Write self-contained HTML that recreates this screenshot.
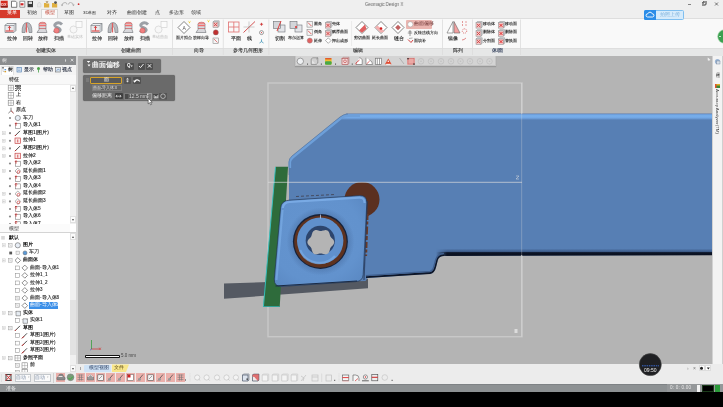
<!DOCTYPE html>
<html><head><meta charset="utf-8">
<style>
*{margin:0;padding:0;box-sizing:border-box}
html,body{width:723px;height:407px;overflow:hidden;background:#000;font-family:"Liberation Sans",sans-serif}
.a{position:absolute}
.t{white-space:nowrap;line-height:1;font-weight:400;will-change:transform}
svg{position:absolute;left:0;top:0;overflow:visible}
</style></head><body><div id="root" style="position:absolute;left:0;top:0;width:723px;height:407px;overflow:hidden;filter:blur(0.3px)">
<div class="a" style="left:0px;top:0px;width:723px;height:18px;background:#efefef"></div>
<div class="a" style="left:0px;top:18px;width:723px;height:30px;background:#f9f9f9;border-top:1px solid #dedede"></div>
<div class="a" style="left:0px;top:48px;width:723px;height:7.5px;background:#e6e7e7;border-top:1px solid #dedede"></div>
<div class="a" style="left:0px;top:55.5px;width:723px;height:0.5px;background:#b0b0b0"></div>
<div class="a" style="left:0px;top:56px;width:76px;height:316px;background:#fff"></div>
<div class="a" style="left:0px;top:56px;width:76px;height:8px;background:#8e8e8e"></div>
<div class="a" style="left:76px;top:56px;width:2px;height:308px;background:#d8d8d8"></div>
<div class="a" style="left:78px;top:56px;width:634px;height:308px;background:#b4b4b4"></div>
<div class="a" style="left:712px;top:56px;width:11px;height:308px;background:#f3f3f3;border-left:1px solid #d2d2d2"></div>
<div class="a" style="left:76px;top:364px;width:647px;height:20px;background:#ececec"></div>
<div class="a" style="left:0px;top:372px;width:76px;height:12px;background:#ececec"></div>
<div class="a" style="left:0px;top:383.6px;width:723px;height:8.2px;background:#8d9193;border-top:0.5px solid #7e8285"></div>
<svg width="723" height="407" viewBox="0 0 723 407">
<defs>
<clipPath id="vpc"><rect x="78" y="56" width="634" height="308"/></clipPath>
<linearGradient id="topg" x1="0" y1="113.5" x2="0" y2="120" gradientUnits="userSpaceOnUse">
 <stop offset="0" stop-color="#5d7db0"/>
 <stop offset="0.12" stop-color="#6a9ad8"/>
 <stop offset="0.35" stop-color="#78b0ec"/>
 <stop offset="0.68" stop-color="#72a6e4"/>
 <stop offset="1" stop-color="#577fb4"/>
</linearGradient>
<linearGradient id="botg" x1="0" y1="248.5" x2="0" y2="255.2" gradientUnits="userSpaceOnUse">
 <stop offset="0" stop-color="#577fb4"/>
 <stop offset="0.45" stop-color="#3d5c8a"/>
 <stop offset="0.62" stop-color="#0c1426"/>
 <stop offset="1" stop-color="#0a1020"/>
</linearGradient>
<radialGradient id="insg" cx="0.45" cy="0.45" r="0.7">
 <stop offset="0" stop-color="#6494cf"/>
 <stop offset="0.7" stop-color="#6292cd"/>
 <stop offset="1" stop-color="#5a88c2"/>
</radialGradient>
<linearGradient id="fadeLg" x1="436" y1="0" x2="447" y2="0" gradientUnits="userSpaceOnUse"><stop offset="0" stop-color="#000"/><stop offset="1" stop-color="#fff"/></linearGradient>
<mask id="fadeL" maskUnits="userSpaceOnUse" x="400" y="240" width="330" height="30"><rect x="400" y="240" width="330" height="30" fill="url(#fadeLg)"/></mask>
<radialGradient id="shad" cx="0.5" cy="0.5" r="0.5">
 <stop offset="0.7" stop-color="#3a5a8a" stop-opacity="0.5"/>
 <stop offset="1" stop-color="#3a5a8a" stop-opacity="0"/>
</radialGradient>
</defs>
<g clip-path="url(#vpc)">
  <polygon points="224,283.5 368,278.8 368,288.2 224,298.8" fill="#545962"/>
  <rect x="268" y="83" width="254" height="253.7" fill="none" stroke="#c8c8c8" stroke-width="1.4"/>
  <polygon points="275.5,166.8 288,166.8 279.7,307 263.2,307" fill="#2e6b3b"/>
  <line x1="275.5" y1="167" x2="263.4" y2="307" stroke="#35c4c4" stroke-width="0.9"/>
  <line x1="279.7" y1="306.5" x2="263.2" y2="306.5" stroke="#35b0b0" stroke-width="0.8"/>
  <!-- body -->
  <path d="M289,290 L289,162 Q289,158.5 292,156 L340,117 Q343.5,114 348,114 L712,114 L712,255 L444,255.8 Q439,256.2 437.8,260 L436,267 Q434.5,273.2 430,273.8 L367.5,278 L365.5,281 L289,283 Z" fill="#577fb4"/>
  <path d="M346,113.5 L712,113.5 L712,120 L341.5,120z" fill="url(#topg)"/>
  <path d="M436,248.5 L712,248.5 L712,255.2 L436,256z" fill="url(#botg)" mask="url(#fadeL)"/>
  <!-- left part bottom dark edge -->
  <path d="M366,277.2 L430,273 Q434,272.3 435.3,266.5 L437,259.8 Q438.6,255.2 444,255.2" stroke="#0e1628" stroke-width="1.8" fill="none"/>
  <path d="M366,275.6 L430,271.4 Q433,270.8 434,266 L435.8,259.5 Q437.3,253.8 444,253.5" stroke="#3f5f8e" stroke-width="1.4" fill="none"/>
  <!-- diagonal highlight -->
  <path d="M289.8,168 L289.8,162 Q290,159.5 292.8,157.2 L340.8,118.2 Q343.8,115.6 348,115.6 L360,115.6" stroke="#6d9fd9" stroke-width="2.6" fill="none"/>
  <path d="M289,175 L289,162 Q289,158.5 292,156 L340,117 Q343.5,114 348,114" stroke="#54749e" stroke-width="0.6" fill="none"/>
  <!-- brown hole -->
  <circle cx="362" cy="199.5" r="17.5" fill="#5b3020"/>
  <path d="M367.5,214 L366,256" stroke="#6a3a26" stroke-width="2.2" stroke-dasharray="6,1.5,3,2,8,1.5,4,2"/><path d="M367.2,201 L364,280" stroke="#2a3c5e" stroke-width="1.2" opacity="0.8"/>
  <!-- insert -->
  <path d="M289,200.2 L359.5,195.6 Q367,195.1 366.8,203 L363.2,274.5 Q362.8,281.2 356,281.6 L282,286.4 Q274,287 274.3,279 L280.6,208 Q281.3,200.7 289,200.2 Z" fill="url(#insg)" stroke="#1a2a44" stroke-width="0.6"/>
  <path d="M282.8,208 Q283.3,202.3 289.5,202 L359,197.6 Q364.5,197.3 364.6,203" stroke="#80b0ea" stroke-width="2.2" fill="none" opacity="0.8"/>
  <path d="M282.6,210 L276.5,280" stroke="#7fb0ea" stroke-width="2" fill="none" opacity="0.6"/>
  <path d="M275.5,286 L357,281" stroke="#1a2a44" stroke-width="1" fill="none"/>
  <path d="M296,196.5 L335,194.5" stroke="#3a2a2a" stroke-width="1" stroke-dasharray="3,2" opacity="0.6"/>
  <!-- ring -->
  <circle cx="320.5" cy="241.5" r="34" fill="url(#shad)"/>
  <circle cx="320.4" cy="241.4" r="27.5" fill="#16223a"/>
  <circle cx="320.4" cy="241.6" r="26.2" fill="#5e321f"/>
  <circle cx="320.2" cy="240.8" r="23.2" fill="#6090cc"/>
  <path d="M300,250 A21,21 0 0 0 335,256" stroke="#7db0ea" stroke-width="2.5" fill="none" opacity="0.6"/>
  
  <circle cx="320.3" cy="240.4" r="14.6" fill="#24385c" opacity="0.85"/>
  <polygon points="323.8,230.4 324.7,230.2 325.6,230.1 326.5,230.2 327.4,230.5 328.1,231.0 328.7,231.7 329.1,232.5 329.4,233.3 329.7,234.2 329.9,235.0 330.1,235.8 330.4,236.5 330.8,237.1 331.3,237.7 331.9,238.3 332.6,238.9 333.2,239.6 333.7,240.3 334.0,241.2 334.2,242.0 334.1,242.9 333.8,243.8 333.4,244.5 332.8,245.3 332.2,245.9 331.5,246.5 331.0,247.1 330.6,247.7 330.2,248.3 330.0,249.1 329.8,249.9 329.5,250.7 329.3,251.6 328.8,252.4 328.3,253.2 327.6,253.7 326.8,254.1 326.0,254.3 325.1,254.3 324.1,254.1 323.3,253.9 322.4,253.7 321.7,253.5 320.9,253.4 320.2,253.4 319.4,253.6 318.6,253.8 317.8,254.0 316.9,254.2 316.0,254.3 315.1,254.2 314.2,253.9 313.5,253.4 312.9,252.7 312.5,251.9 312.2,251.1 311.9,250.2 311.7,249.4 311.5,248.6 311.2,247.9 310.8,247.3 310.3,246.7 309.7,246.1 309.0,245.5 308.4,244.8 307.9,244.1 307.6,243.2 307.4,242.4 307.5,241.5 307.8,240.6 308.2,239.9 308.8,239.1 309.4,238.5 310.1,237.9 310.6,237.3 311.0,236.7 311.4,236.1 311.6,235.3 311.8,234.5 312.1,233.7 312.3,232.8 312.8,232.0 313.3,231.2 314.0,230.7 314.8,230.3 315.6,230.1 316.5,230.1 317.5,230.3 318.3,230.5 319.2,230.7 319.9,230.9 320.7,231.0 321.4,231.0 322.2,230.8 323.0,230.6" fill="#b4b4b4"/>
  <path d="M320.5,214.5 v4" stroke="#b4c8e8" stroke-width="0.8"/>
  <line x1="268" y1="182.4" x2="522" y2="182.4" stroke="#dcdcdc" stroke-opacity="0.55" stroke-width="1.2"/>
  <line x1="521.6" y1="83" x2="521.6" y2="114" stroke="#dcdcdc" stroke-opacity="0.5" stroke-width="1.2"/><line x1="521.6" y1="114" x2="521.6" y2="255" stroke="#dcdcdc" stroke-opacity="0.25" stroke-width="1.2"/><line x1="521.6" y1="255" x2="521.6" y2="337" stroke="#d0d0d0" stroke-opacity="0.8" stroke-width="1.3"/>
</g>
</svg>
<svg width="723" height="20">
<rect x="0.7" y="0.7" width="7" height="6.8" fill="#d42a1e"/>
<rect x="0.7" y="5.5" width="7" height="2" fill="#8a1a14"/>
<text x="1.3" y="5.6" font-size="3.8" fill="#ffe0e0" font-family="Liberation Sans" font-weight="bold">DX</text>
<path d="M11.5,1.2 h4 l1.3,1.3 v4.8 h-5.3z" fill="#fff" stroke="#444" stroke-width="0.7"/>
<path d="M19.8,1.2 h5 v6 h-5z" fill="#fff" stroke="#555" stroke-width="0.6"/>
<path d="M20.5,3.2 h3 v2.2 h-3z" fill="#d02828"/>
<rect x="27.6" y="1" width="5.4" height="6.2" fill="#3a3a3a"/>
<rect x="28.6" y="1.6" width="3.4" height="2.4" fill="#ddd"/>
<path d="M37.5,7 h3.5 v-3 l-1.7,-2 l-1.8,2z" fill="#e8e8e8" stroke="#ccc" stroke-width="0.5"/>
<path d="M44,3 h2 l0.6,0.6 h2.6 v3.8 h-5.2z" fill="#e0b040"/>
<path d="M45.5,1.5 l1.5,1.6 l1.5,-1.6z" fill="#8a6a30"/>
<path d="M52,3 h2 l0.6,0.6 h2.6 v3.8 h-5.2z" fill="#e0b040"/>
<circle cx="55.5" cy="2.6" r="1.4" fill="#555"/>
<path d="M62,6 q0,-3.5 3,-3.5 q2,0 2,2" fill="none" stroke="#b0b0b0" stroke-width="0.9"/><path d="M60.8,4.5 l1.2,1.8 l1.3,-1.8z" fill="#b0b0b0"/>
<path d="M73.5,6 q0,-3.5 -3,-3.5 q-2,0 -2,2" fill="none" stroke="#b0b0b0" stroke-width="0.9"/><path d="M72.2,4.5 l1.3,1.8 l1.2,-1.8z" fill="#b0b0b0"/>
<circle cx="78.6" cy="4.2" r="0.9" fill="#d03030"/>
<path d="M688,4.5 h3" stroke="#555" stroke-width="0.7"/>
<rect x="702.5" y="2.5" width="3" height="3" fill="none" stroke="#555" stroke-width="0.6"/>
<rect x="703.5" y="1.5" width="3" height="3" fill="none" stroke="#555" stroke-width="0.6"/>
<path d="M715,2.5 l3,3 m0,-3 l-3,3" stroke="#444" stroke-width="0.7"/>
</svg>
<div class="a t" style="left:365px;top:1.6px;font-size:5.2px;color:#666;font-weight:normal;transform:scaleX(0.83);transform-origin:0 0">Geomagic Design X</div>
<div class="a" style="left:644px;top:10px;width:40px;height:9.5px;background:#d6ebfb;border:1px solid #7fbff0;border-radius:1.5px"></div>
<div class="a" style="left:644px;top:10px;width:12px;height:9.5px;background:#2b8de8;border-radius:1.5px 0 0 1.5px"></div>
<svg width="723" height="20"><path d="M647.5,17 a1.6,1.6 0 0 1 0.3,-3.2 a2.3,2.3 0 0 1 4.4,0 a1.6,1.6 0 0 1 0.3,3.2z" fill="none" stroke="#fff" stroke-width="0.9"/></svg>
<div class="a t" style="left:660px;top:12.3px;font-size:5px;color:#7ab0dc;">拍照上传</div>
<div class="a" style="left:0px;top:9.5px;width:20px;height:8.5px;background:#d63a2c"></div>
<div class="a t" style="left:6.8px;top:11px;font-size:4.5px;color:#fff;">菜单</div>
<div class="a t" style="left:26.5px;top:11px;font-size:4.5px;color:#2e2e2e;">初始</div>
<div class="a" style="left:40.5px;top:9.3px;width:17.5px;height:9.2px;background:#f9f9f9;border:1px solid #d8d8d8;border-bottom:none"></div>
<div class="a t" style="left:44.8px;top:11px;font-size:4.5px;color:#c04030;">模型</div>
<div class="a t" style="left:64px;top:11px;font-size:4.5px;color:#2e2e2e;">草图</div>
<div class="a t" style="left:83px;top:11px;font-size:4.3px;color:#2e2e2e;">3D草图</div>
<div class="a t" style="left:107px;top:11px;font-size:4.5px;color:#2e2e2e;">对齐</div>
<div class="a t" style="left:127px;top:11px;font-size:4.5px;color:#2e2e2e;">曲面创建</div>
<div class="a t" style="left:154.5px;top:11px;font-size:4.5px;color:#2e2e2e;">点</div>
<div class="a t" style="left:169px;top:11px;font-size:4.5px;color:#2e2e2e;">多边形</div>
<div class="a t" style="left:191px;top:11px;font-size:4.5px;color:#2e2e2e;">领域</div>
<div class="a t" style="left:6.5px;top:35.9px;font-size:5px;color:#3a3a3a;font-weight:bold">拉伸</div>
<div class="a t" style="left:22.5px;top:35.9px;font-size:5px;color:#3a3a3a;font-weight:bold">回转</div>
<div class="a t" style="left:38px;top:35.9px;font-size:5px;color:#3a3a3a;font-weight:bold">放样</div>
<div class="a t" style="left:54px;top:35.9px;font-size:5px;color:#3a3a3a;font-weight:bold">扫描</div>
<div class="a t" style="left:67px;top:35.2px;font-size:4.2px;color:#c0c0c0;">基础实体</div>
<div class="a t" style="left:35.5px;top:49.4px;font-size:4.5px;color:#444;font-weight:bold">创建实体</div>
<div class="a t" style="left:92px;top:35.9px;font-size:5px;color:#3a3a3a;font-weight:bold">拉伸</div>
<div class="a t" style="left:108px;top:35.9px;font-size:5px;color:#3a3a3a;font-weight:bold">回转</div>
<div class="a t" style="left:124px;top:35.9px;font-size:5px;color:#3a3a3a;font-weight:bold">放样</div>
<div class="a t" style="left:140px;top:35.9px;font-size:5px;color:#3a3a3a;font-weight:bold">扫描</div>
<div class="a t" style="left:152px;top:35.2px;font-size:4.2px;color:#c0c0c0;">基础曲面</div>
<div class="a t" style="left:121px;top:49.4px;font-size:4.5px;color:#444;font-weight:bold">创建曲面</div>
<div class="a t" style="left:176px;top:35.9px;font-size:4.3px;color:#3a3a3a;font-weight:bold">面片拟合</div>
<div class="a t" style="left:193px;top:35.9px;font-size:4.3px;color:#3a3a3a;font-weight:bold">放样向导</div>
<div class="a t" style="left:194px;top:49.4px;font-size:4.5px;color:#444;font-weight:bold">向导</div>
<div class="a t" style="left:231px;top:35.9px;font-size:5px;color:#3a3a3a;font-weight:bold">平面</div>
<div class="a t" style="left:247px;top:35.9px;font-size:5px;color:#3a3a3a;font-weight:bold">线</div>
<div class="a t" style="left:233px;top:49.4px;font-size:4.5px;color:#444;font-weight:bold">参考几何图形</div>
<div class="a t" style="left:275px;top:35.9px;font-size:5px;color:#3a3a3a;font-weight:bold">切割</div>
<div class="a t" style="left:288px;top:35.9px;font-size:4.2px;color:#3a3a3a;font-weight:bold">布尔运算</div>
<div class="a t" style="left:314px;top:22.3px;font-size:4.4px;color:#3a3a3a;font-weight:bold">圆角</div>
<div class="a t" style="left:314px;top:30.4px;font-size:4.4px;color:#3a3a3a;font-weight:bold">倒角</div>
<div class="a t" style="left:314px;top:38.5px;font-size:4.4px;color:#3a3a3a;font-weight:bold">延伸</div>
<div class="a t" style="left:332px;top:22.3px;font-size:4.4px;color:#3a3a3a;font-weight:bold">壳体</div>
<div class="a t" style="left:332px;top:30.4px;font-size:4.4px;color:#3a3a3a;font-weight:bold">赋厚曲面</div>
<div class="a t" style="left:332px;top:38.5px;font-size:4.4px;color:#3a3a3a;font-weight:bold">押出成形</div>
<div class="a t" style="left:354px;top:35.9px;font-size:4.3px;color:#3a3a3a;font-weight:bold">剪切曲面</div>
<div class="a t" style="left:372px;top:35.9px;font-size:4.3px;color:#3a3a3a;font-weight:bold">延长曲面</div>
<div class="a t" style="left:394px;top:35.9px;font-size:5px;color:#3a3a3a;font-weight:bold">缝合</div>
<div class="a" style="left:406px;top:20px;width:26px;height:8.5px;background:#eab5b0;border-radius:1px"></div>
<div class="a t" style="left:413.5px;top:22px;font-size:4.6px;color:#6a3030;">曲面偏移</div>
<div class="a t" style="left:414px;top:31.3px;font-size:4.4px;color:#3a3a3a;font-weight:bold">反转法线方向</div>
<div class="a t" style="left:414px;top:38.9px;font-size:4.4px;color:#3a3a3a;font-weight:bold">面填补</div>
<div class="a t" style="left:353px;top:49.4px;font-size:4.5px;color:#444;font-weight:bold">编辑</div>
<div class="a t" style="left:448px;top:35.9px;font-size:5px;color:#3a3a3a;font-weight:bold">镜像</div>
<div class="a t" style="left:453px;top:49.4px;font-size:4.5px;color:#444;font-weight:bold">阵列</div>
<div class="a t" style="left:482.5px;top:22.3px;font-size:4.4px;color:#3a3a3a;font-weight:bold">移动体</div>
<div class="a t" style="left:482.5px;top:30.4px;font-size:4.4px;color:#3a3a3a;font-weight:bold">删除体</div>
<div class="a t" style="left:482.5px;top:38.5px;font-size:4.4px;color:#3a3a3a;font-weight:bold">分割面</div>
<div class="a t" style="left:505px;top:22.3px;font-size:4.4px;color:#3a3a3a;font-weight:bold">移动面</div>
<div class="a t" style="left:505px;top:30.4px;font-size:4.4px;color:#3a3a3a;font-weight:bold">删除面</div>
<div class="a t" style="left:505px;top:38.5px;font-size:4.4px;color:#3a3a3a;font-weight:bold">替换面</div>
<div class="a t" style="left:491.5px;top:49.4px;font-size:4.6px;color:#3a4660;font-weight:bold">体/面</div>
<svg width="723" height="60"><g opacity="1"><path d="M7,23.5 L16,23.5 L16,30.5 L14,32.5 L5,32.5 L5,25.5z" fill="#c9ccd0" stroke="#6a6e74" stroke-width="0.6"/><path d="M5,25.5 L7,23.5 L16,23.5 L14,25.5z" fill="#eef0f2" stroke="#6a6e74" stroke-width="0.5"/><rect x="5.5" y="26.0" width="8" height="6" fill="#e9eaec"/><path d="M5.5,31.0 h8" stroke="#e05050" stroke-width="1.2"/><path d="M9.5,30.5 v-4 m-1.3,1.3 l1.3,-1.5 l1.3,1.5" stroke="#d02020" stroke-width="0.8" fill="none"/></g><path d="M22,32.5 Q22,22.5 27,22.5 Q32,22.5 32,32.5 L29,32.5 Q29,26.5 27,26.5 Q25,26.5 25,32.5z" fill="#b9bcc1" stroke="#6d7076" stroke-width="0.6"/><path d="M26.5,23.0 L26.5,32.5" stroke="#e06060" stroke-width="1.3"/><ellipse cx="42.5" cy="24.0" rx="3.5" ry="1.8" fill="#f08a8a" stroke="#b04848" stroke-width="0.5"/><path d="M39,24.0 L39,29.5 L37,32.5 L47,32.5 L46,29.5 L46,24.0" fill="#d8d8dc" stroke="#6d7076" stroke-width="0.6"/><path d="M39,25.5 h7" stroke="#f07070" stroke-width="1.5"/><path d="M39,28.5 h7" stroke="#c04848" stroke-width="0.6"/><path d="M62,24.5 Q59,21.5 56,23.5 Q53,25.5 57,27.5 Q62,29.5 59,31.5 Q56,32.5 54,30.5" fill="none" stroke="#9ca0a6" stroke-width="3"/><circle cx="56.5" cy="30.5" r="2.6" fill="#f08080" stroke="#b04848" stroke-width="0.4"/><g opacity="0.4"><rect x="76" y="21.5" width="6" height="6" fill="#fff" stroke="#888" stroke-width="0.6"/><circle cx="73.5" cy="29.5" r="3.5" fill="#f6f6f6" stroke="#888" stroke-width="0.6"/></g><path d="M86.5,19.5 V55" stroke="#dcdcdc" stroke-width="0.8"/><g opacity="1"><path d="M93,23.5 L102,23.5 L102,30.5 L100,32.5 L91,32.5 L91,25.5z" fill="#c9ccd0" stroke="#6a6e74" stroke-width="0.6"/><path d="M91,25.5 L93,23.5 L102,23.5 L100,25.5z" fill="#eef0f2" stroke="#6a6e74" stroke-width="0.5"/><rect x="91.5" y="26.0" width="8" height="6" fill="#e9eaec"/><path d="M91.5,31.0 h8" stroke="#e05050" stroke-width="1.2"/><path d="M95.5,30.5 v-4 m-1.3,1.3 l1.3,-1.5 l1.3,1.5" stroke="#d02020" stroke-width="0.8" fill="none"/></g><path d="M108,32.5 Q108,22.5 113,22.5 Q118,22.5 118,32.5 L115,32.5 Q115,26.5 113,26.5 Q111,26.5 111,32.5z" fill="#b9bcc1" stroke="#6d7076" stroke-width="0.6"/><path d="M112.5,23.0 L112.5,32.5" stroke="#e06060" stroke-width="1.3"/><ellipse cx="128.5" cy="24.0" rx="3.5" ry="1.8" fill="#f08a8a" stroke="#b04848" stroke-width="0.5"/><path d="M125,24.0 L125,29.5 L123,32.5 L133,32.5 L132,29.5 L132,24.0" fill="#d8d8dc" stroke="#6d7076" stroke-width="0.6"/><path d="M125,25.5 h7" stroke="#f07070" stroke-width="1.5"/><path d="M125,28.5 h7" stroke="#c04848" stroke-width="0.6"/><path d="M148,24.5 Q145,21.5 142,23.5 Q139,25.5 143,27.5 Q148,29.5 145,31.5 Q142,32.5 140,30.5" fill="none" stroke="#9ca0a6" stroke-width="3"/><circle cx="142.5" cy="30.5" r="2.6" fill="#f08080" stroke="#b04848" stroke-width="0.4"/><g opacity="0.4"><rect x="161" y="21.5" width="6" height="6" fill="#fff" stroke="#888" stroke-width="0.6"/><circle cx="158.5" cy="29.5" r="3.5" fill="#f6f6f6" stroke="#888" stroke-width="0.6"/></g><path d="M172.5,19.5 V55" stroke="#dcdcdc" stroke-width="0.8"/><path d="M184,21.5 L190,27.5 L184,33.5 L178,27.5z" fill="#fff" stroke="#555" stroke-width="0.7"/><text x="182.5" y="29.5" font-size="5" fill="#555">A</text><path d="M188,20.5 l1.5,1.5 l1.5,-1.5 l-1.5,3z" fill="#f0d020"/><ellipse cx="201.5" cy="24.0" rx="3.5" ry="1.8" fill="#f08a8a" stroke="#b04848" stroke-width="0.5"/><path d="M198,24.0 L198,29.5 L196,32.5 L206,32.5 L205,29.5 L205,24.0" fill="#d8d8dc" stroke="#6d7076" stroke-width="0.6"/><path d="M198,25.5 h7" stroke="#f07070" stroke-width="1.5"/><path d="M198,28.5 h7" stroke="#c04848" stroke-width="0.6"/><path d="M207,19.5 l1.5,1.5 l1.5,-1.5 l-1.5,3z" fill="#f0d020"/><path d="M213,22.0 l1.2,-1.2 h5 v5.3 l-1.2,1.2z" fill="#d8dade" stroke="#777" stroke-width="0.45"/><rect x="213" y="22.0" width="5" height="5.3" fill="#f4c8c8" stroke="#777" stroke-width="0.45"/><path d="M214,23.1 l3,3 m0,-3 l-3,3" stroke="#d04040" stroke-width="0.9"/><circle cx="215.8" cy="32.4" r="2.6" fill="#c03030" stroke="#888" stroke-width="0.4"/><rect x="213" y="38" width="5.5" height="5.5" fill="#f4f4f4" stroke="#777" stroke-width="0.5"/><path d="M214,39 l3.5,3.5" stroke="#e08080" stroke-width="1"/><path d="M223.3,19.5 V55" stroke="#dcdcdc" stroke-width="0.8"/><rect x="228.5" y="22" width="10.5" height="10" fill="none" stroke="#e07070" stroke-width="0.8"/><path d="M233.8,22 v10 M228.5,27 h10.5" stroke="#e07070" stroke-width="0.8"/><path d="M243.5,32.5 L255,21.5" stroke="#d04040" stroke-width="0.9"/><path d="M243.5,27 h11 M249,21.5 v11" stroke="#888" stroke-width="0.4"/><path d="M261.5,22.5 l1.2,1.8 l-1.2,1.8 l-1.2,-1.8z" fill="#d04040"/><path d="M259.8,24.3 h3.4" stroke="#d04040" stroke-width="0.4"/><circle cx="261.5" cy="32.6" r="2" fill="none" stroke="#555" stroke-width="0.55"/><circle cx="261.5" cy="32.6" r="0.6" fill="#d04040"/><path d="M261.5,39.3 v2.3 l-2,1.4 M261.5,41.6 l2,1.4" stroke="#2a8ab0" stroke-width="0.7" fill="none"/><path d="M268.8,19.5 V55" stroke="#dcdcdc" stroke-width="0.8"/><rect x="278" y="25" width="7" height="7" fill="#e4e6ea" stroke="#6d7076" stroke-width="0.6"/><rect x="273.5" y="21.5" width="7" height="7" fill="#d4d6da" stroke="#6d7076" stroke-width="0.6"/><path d="M277,31 L281,21" stroke="#e04040" stroke-width="1"/><rect x="295" y="25" width="7" height="7" fill="#e4e6ea" stroke="#6d7076" stroke-width="0.6"/><rect x="290" y="21.5" width="7" height="7" fill="#d4d6da" stroke="#6d7076" stroke-width="0.6"/><circle cx="296" cy="27" r="1" fill="#e03030"/><rect x="307" y="21.6" width="5.5" height="5.5" fill="#f4f4f4" stroke="#777" stroke-width="0.5"/><path d="M308,22.6 l3.5,3.5" stroke="#e06060" stroke-width="1"/><rect x="307" y="29.700000000000003" width="5.5" height="5.5" fill="#f4f4f4" stroke="#777" stroke-width="0.5"/><path d="M308,30.700000000000003 l3.5,3.5" stroke="#e06060" stroke-width="1"/><circle cx="309.8" cy="40.599999999999994" r="2.6" fill="#e06060" stroke="#888" stroke-width="0.4"/><path d="M325.5,22.8 l1.2,-1.2 h5 v5.3 l-1.2,1.2z" fill="#d8dade" stroke="#777" stroke-width="0.45"/><rect x="325.5" y="22.8" width="5" height="5.3" fill="#f4c8c8" stroke="#777" stroke-width="0.45"/><path d="M326.5,23.900000000000002 l3,3 m0,-3 l-3,3" stroke="#d04040" stroke-width="0.9"/><path d="M325.5,30.900000000000002 l1.2,-1.2 h5 v5.3 l-1.2,1.2z" fill="#d8dade" stroke="#777" stroke-width="0.45"/><rect x="325.5" y="30.900000000000002" width="5" height="5.3" fill="#f4c8c8" stroke="#777" stroke-width="0.45"/><path d="M326.5,32.0 l3,3 m0,-3 l-3,3" stroke="#d04040" stroke-width="0.9"/><path d="M328.3,37.8 L331.0,40.599999999999994 L328.3,43.3 L325.5,40.599999999999994z" fill="#fff" stroke="#666" stroke-width="0.5"/><path d="M351.6,21 V46" stroke="#e0e0e0" stroke-width="0.6"/><path d="M362,21.5 L368,27.5 L362,33.5 L356,27.5z" fill="#fff" stroke="#555" stroke-width="0.7"/><path d="M359,30.5 L365,24.5 L366.5,29.0 L362,32.7z" fill="#e06060"/><path d="M381,21.5 L387,27.5 L381,33.5 L375,27.5z" fill="#fff" stroke="#555" stroke-width="0.7"/><path d="M377.5,25.5 L384.5,31.5 L381,32.8 L375,27.5z" fill="#f4b0b0"/><circle cx="381" cy="28.5" r="1.3" fill="#d02020"/><path d="M398,21.5 L404,27.5 L398,33.5 L392,27.5z" fill="#fff" stroke="#555" stroke-width="0.7"/><path d="M396,25.5 L400,25.5 L400,29.5 L396,29.5z" transform="rotate(45 398 27.5)" fill="#c06060"/><circle cx="410.3" cy="24.3" r="2.6" fill="#fff" stroke="#888" stroke-width="0.4"/><path d="M410,31 v5 m-2.2,-3 h4.4 m-3.5,-1 l1.3,-1.5 l1.3,1.5" stroke="#555" stroke-width="0.6" fill="none"/><path d="M408,39.5 l3,3 l2,-2.5" stroke="#d04040" stroke-width="1" fill="none"/><path d="M409,38.5 l3.5,-0.5" stroke="#777" stroke-width="0.6"/><path d="M442.5,19.5 V55" stroke="#dcdcdc" stroke-width="0.8"/><path d="M453,21.5 L447,33 L453,33z" fill="#fff" stroke="#666" stroke-width="0.6"/><path d="M454,21.5 L460,33 L454,33z" fill="#f2a0a0" stroke="#666" stroke-width="0.6"/><path d="M462,22 h1 m2.5,0 h1 M462,25 h1 m2.5,0 h1" stroke="#d04040" stroke-width="1"/><circle cx="464.5" cy="31" r="2.2" fill="none" stroke="#d04040" stroke-width="0.7" stroke-dasharray="1,0.8"/><path d="M462,40 q2,0 4,-2" stroke="#d04040" stroke-width="0.6" fill="none"/><path d="M472.5,19.5 V55" stroke="#dcdcdc" stroke-width="0.8"/><path d="M476,22.8 l1.2,-1.2 h5 v5.3 l-1.2,1.2z" fill="#d8dade" stroke="#777" stroke-width="0.45"/><rect x="476" y="22.8" width="5" height="5.3" fill="#f4c8c8" stroke="#777" stroke-width="0.45"/><path d="M477,23.900000000000002 l3,3 m0,-3 l-3,3" stroke="#d04040" stroke-width="0.9"/><path d="M476,30.900000000000002 l1.2,-1.2 h5 v5.3 l-1.2,1.2z" fill="#d8dade" stroke="#777" stroke-width="0.45"/><rect x="476" y="30.900000000000002" width="5" height="5.3" fill="#f4c8c8" stroke="#777" stroke-width="0.45"/><path d="M477,32.0 l3,3 m0,-3 l-3,3" stroke="#d04040" stroke-width="0.9"/><path d="M476,39.0 l1.2,-1.2 h5 v5.3 l-1.2,1.2z" fill="#d8dade" stroke="#777" stroke-width="0.45"/><rect x="476" y="39.0" width="5" height="5.3" fill="#f4c8c8" stroke="#777" stroke-width="0.45"/><path d="M477,40.099999999999994 l3,3 m0,-3 l-3,3" stroke="#d04040" stroke-width="0.9"/><path d="M498.5,22.8 l1.2,-1.2 h5 v5.3 l-1.2,1.2z" fill="#d8dade" stroke="#777" stroke-width="0.45"/><rect x="498.5" y="22.8" width="5" height="5.3" fill="#f4c8c8" stroke="#777" stroke-width="0.45"/><path d="M499.5,23.900000000000002 l3,3 m0,-3 l-3,3" stroke="#e02020" stroke-width="0.9"/><path d="M498.5,30.900000000000002 l1.2,-1.2 h5 v5.3 l-1.2,1.2z" fill="#d8dade" stroke="#777" stroke-width="0.45"/><rect x="498.5" y="30.900000000000002" width="5" height="5.3" fill="#f4c8c8" stroke="#777" stroke-width="0.45"/><path d="M499.5,32.0 l3,3 m0,-3 l-3,3" stroke="#e02020" stroke-width="0.9"/><path d="M498.5,39.0 l1.2,-1.2 h5 v5.3 l-1.2,1.2z" fill="#d8dade" stroke="#777" stroke-width="0.45"/><rect x="498.5" y="39.0" width="5" height="5.3" fill="#f4c8c8" stroke="#777" stroke-width="0.45"/><path d="M499.5,40.099999999999994 l3,3 m0,-3 l-3,3" stroke="#e02020" stroke-width="0.9"/><path d="M520.5,19.5 V55" stroke="#dcdcdc" stroke-width="0.8"/></svg>
<svg width="723" height="60"><circle cx="724.5" cy="36.5" r="6.8" fill="#3aa050"/><circle cx="724.5" cy="36.5" r="6.8" fill="none" stroke="#9ad0a0" stroke-width="0.6"/><path d="M719,36.5 h2" stroke="#fff" stroke-width="0.7"/></svg>
<div class="a" style="left:0px;top:56px;width:76px;height:9px;background:#8b8d8f"></div>
<div class="a t" style="left:2px;top:58px;font-size:5px;color:#e8e8e8;">树</div>
<div class="a t" style="left:64.5px;top:58px;font-size:5px;color:#f0f0f0;">ᵻ</div>
<svg width="80" height="80"><path d="M70.8,58.8 l2.6,2.6 m0,-2.6 l-2.6,2.6" stroke="#f4f4f4" stroke-width="0.7"/></svg>
<div class="a" style="left:0px;top:65px;width:76px;height:9.5px;background:#f4f4f4"></div>
<div class="a" style="left:1px;top:65.5px;width:13px;height:9px;background:#fff;border:1px solid #e2e2e2;border-bottom:none"></div>
<svg width="80" height="80">
<rect x="2" y="67" width="2" height="1.5" fill="#888"/><rect x="4.5" y="69" width="1.6" height="1.3" fill="#5a9ad8"/><rect x="4.5" y="71" width="1.6" height="1.3" fill="#e0a020"/><path d="M3,68.5 v3 h1.5" stroke="#888" stroke-width="0.4" fill="none"/>
<rect x="17" y="67.5" width="4.5" height="4.5" fill="#dbe6f3" stroke="#4a7ab0" stroke-width="0.6"/><path d="M18,69 h2.5 M18,70.5 h2.5" stroke="#4a7ab0" stroke-width="0.4"/>
<circle cx="38.5" cy="68.5" r="1.5" fill="#4aa04a"/><path d="M38.5,70 v2.5" stroke="#4aa04a" stroke-width="0.8"/>
<rect x="55.5" y="67.5" width="5" height="4.5" fill="#dde6ef" stroke="#555" stroke-width="0.5"/><path d="M56.5,71 l1.5,-2 l1.5,1.2 l1,-1" stroke="#4a7ab0" stroke-width="0.5" fill="none"/>
</svg>
<div class="a t" style="left:8px;top:68.3px;font-size:4.7px;color:#333;font-weight:bold">树</div>
<div class="a t" style="left:23.5px;top:68.3px;font-size:4.6px;color:#3a4050;font-weight:bold">显示</div>
<div class="a t" style="left:42.5px;top:68.3px;font-size:4.6px;color:#3a4050;font-weight:bold">帮助</div>
<div class="a t" style="left:61.8px;top:68.3px;font-size:4.6px;color:#3a4050;font-weight:bold">视点</div>
<div class="a" style="left:0px;top:74.5px;width:76px;height:10px;background:#f8f8f8;border-bottom:1px solid #ececec"></div>
<div class="a t" style="left:9px;top:77.3px;font-size:5.2px;color:#444;font-weight:bold">特征</div>
<div class="a" style="left:70px;top:84.5px;width:6px;height:139px;background:#f0f0f0"></div>
<div class="a" style="left:70px;top:84.5px;width:6px;height:7px;background:#fbfbfb;border:1px solid #e0e0e0"></div>
<div class="a t" style="left:71.6px;top:86.3px;font-size:4px;color:#555;">▴</div>
<div class="a" style="left:70px;top:216px;width:6px;height:7px;background:#fbfbfb;border:1px solid #e0e0e0"></div>
<div class="a t" style="left:71.6px;top:217.8px;font-size:4px;color:#555;">▾</div>
<div class="a t" style="left:15.5px;top:85.5px;font-size:4.9px;color:#333;font-weight:bold">前</div>
<div class="a t" style="left:15.5px;top:93.0px;font-size:4.9px;color:#333;font-weight:bold">上</div>
<div class="a t" style="left:15.5px;top:100.5px;font-size:4.9px;color:#333;font-weight:bold">右</div>
<div class="a t" style="left:15.5px;top:108.0px;font-size:4.9px;color:#333;font-weight:bold">原点</div>
<div class="a t" style="left:22.5px;top:115.5px;font-size:4.9px;color:#333;font-weight:bold">车刀</div>
<div class="a t" style="left:22.5px;top:123.1px;font-size:4.9px;color:#333;font-weight:bold">导入体1</div>
<div class="a t" style="left:22.5px;top:130.7px;font-size:4.9px;color:#333;font-weight:bold">草图1(图片)</div>
<div class="a t" style="left:22.5px;top:138.3px;font-size:4.9px;color:#333;font-weight:bold">拉伸1</div>
<div class="a t" style="left:22.5px;top:145.9px;font-size:4.9px;color:#333;font-weight:bold">草图2(图片)</div>
<div class="a t" style="left:22.5px;top:153.5px;font-size:4.9px;color:#333;font-weight:bold">拉伸2</div>
<div class="a t" style="left:22.5px;top:161.0px;font-size:4.9px;color:#333;font-weight:bold">导入体2</div>
<div class="a t" style="left:22.5px;top:168.5px;font-size:4.9px;color:#333;font-weight:bold">延长曲面1</div>
<div class="a t" style="left:22.5px;top:176.1px;font-size:4.9px;color:#333;font-weight:bold">导入体3</div>
<div class="a t" style="left:22.5px;top:183.7px;font-size:4.9px;color:#333;font-weight:bold">导入体4</div>
<div class="a t" style="left:22.5px;top:191.3px;font-size:4.9px;color:#333;font-weight:bold">延长曲面2</div>
<div class="a t" style="left:22.5px;top:198.9px;font-size:4.9px;color:#333;font-weight:bold">延长曲面3</div>
<div class="a t" style="left:22.5px;top:206.5px;font-size:4.9px;color:#333;font-weight:bold">导入体5</div>
<div class="a t" style="left:22.5px;top:214.0px;font-size:4.9px;color:#333;font-weight:bold">导入体6</div>
<div class="a t" style="left:22.5px;top:221.6px;font-size:4.9px;color:#333;font-weight:bold">导入体7</div>
<svg width="80" height="400"><defs><clipPath id="c1"><rect x="0" y="84.5" width="70" height="139.5"/></clipPath></defs><g clip-path="url(#c1)"><rect x="8.2" y="85.2" width="5.5" height="5.5" fill="#fff" stroke="#777" stroke-width="0.55"/><path d="M10.95,85.2 v5.5 M8.2,87.95 h5.5" stroke="#888" stroke-width="0.4"/><rect x="8.2" y="92.7" width="5.5" height="5.5" fill="#fff" stroke="#777" stroke-width="0.55"/><path d="M10.95,92.7 v5.5 M8.2,95.45 h5.5" stroke="#888" stroke-width="0.4"/><rect x="8.2" y="100.2" width="5.5" height="5.5" fill="#fff" stroke="#777" stroke-width="0.55"/><path d="M10.95,100.2 v5.5 M8.2,102.95 h5.5" stroke="#888" stroke-width="0.4"/><path d="M11.0,107.7 v3 l-2.6,2.5 M11.0,110.7 l2.6,2.5" stroke="#333" stroke-width="0.6" fill="none"/><path d="M11.0,110.7 l2.6,2.5" stroke="#d03030" stroke-width="0.6"/><circle cx="10" cy="118" r="1.1" fill="#8a8a8a"/><circle cx="17.8" cy="118.0" r="2.6" fill="#e8eef6" stroke="#555" stroke-width="0.55"/><circle cx="10" cy="125.6" r="1.1" fill="#8a8a8a"/><rect x="15.5" y="123.3" width="5" height="5" fill="#fff" stroke="#666" stroke-width="0.5"/><path d="M16,125.8 v-3 m-1,1 l1,-1 l1,1" stroke="#d02020" stroke-width="0.7" fill="none"/><rect x="2.2" y="131.6" width="3.2" height="3.2" fill="#f2f2f2" stroke="#c8c8c8" stroke-width="0.4"/><path d="M2.9,133.2 h1.8" stroke="#999" stroke-width="0.4"/><circle cx="10" cy="133.2" r="1.1" fill="#8a8a8a"/><path d="M15,135.89999999999998 L20,130.89999999999998" stroke="#222" stroke-width="0.8"/><path d="M15,135.89999999999998 l1.2,-1.2" stroke="#d02020" stroke-width="0.9"/><rect x="2.2" y="139.20000000000002" width="3.2" height="3.2" fill="#f2f2f2" stroke="#c8c8c8" stroke-width="0.4"/><path d="M2.9,140.8 h1.8" stroke="#999" stroke-width="0.4"/><circle cx="10" cy="140.8" r="1.1" fill="#8a8a8a"/><rect x="15" y="138.0" width="5.5" height="5.5" fill="#fbe8e8" stroke="#c03030" stroke-width="0.6"/><path d="M17.75,142.5 v-3" stroke="#c02020" stroke-width="0.7"/><rect x="2.2" y="146.8" width="3.2" height="3.2" fill="#f2f2f2" stroke="#c8c8c8" stroke-width="0.4"/><path d="M2.9,148.4 h1.8" stroke="#999" stroke-width="0.4"/><circle cx="10" cy="148.4" r="1.1" fill="#8a8a8a"/><path d="M15,151.1 L20,146.1" stroke="#222" stroke-width="0.8"/><path d="M15,151.1 l1.2,-1.2" stroke="#d02020" stroke-width="0.9"/><rect x="2.2" y="154.4" width="3.2" height="3.2" fill="#f2f2f2" stroke="#c8c8c8" stroke-width="0.4"/><path d="M2.9,156 h1.8" stroke="#999" stroke-width="0.4"/><circle cx="10" cy="156" r="1.1" fill="#8a8a8a"/><rect x="15" y="153.2" width="5.5" height="5.5" fill="#fbe8e8" stroke="#c03030" stroke-width="0.6"/><path d="M17.75,157.7 v-3" stroke="#c02020" stroke-width="0.7"/><circle cx="10" cy="163.5" r="1.1" fill="#8a8a8a"/><rect x="15.5" y="161.2" width="5" height="5" fill="#fff" stroke="#666" stroke-width="0.5"/><path d="M16,163.7 v-3 m-1,1 l1,-1 l1,1" stroke="#d02020" stroke-width="0.7" fill="none"/><rect x="2.2" y="169.4" width="3.2" height="3.2" fill="#f2f2f2" stroke="#c8c8c8" stroke-width="0.4"/><path d="M2.9,171 h1.8" stroke="#999" stroke-width="0.4"/><circle cx="10" cy="171" r="1.1" fill="#8a8a8a"/><path d="M17.8,168.2 l2.8,2.8 l-2.8,2.8 l-2.8,-2.8z" fill="#fff" stroke="#666" stroke-width="0.5"/><circle cx="18.5" cy="172.0" r="1.4" fill="none" stroke="#d03030" stroke-width="0.6"/><circle cx="10" cy="178.6" r="1.1" fill="#8a8a8a"/><rect x="15.5" y="176.29999999999998" width="5" height="5" fill="#fff" stroke="#666" stroke-width="0.5"/><path d="M16,178.79999999999998 v-3 m-1,1 l1,-1 l1,1" stroke="#d02020" stroke-width="0.7" fill="none"/><circle cx="10" cy="186.2" r="1.1" fill="#8a8a8a"/><rect x="15.5" y="183.89999999999998" width="5" height="5" fill="#fff" stroke="#666" stroke-width="0.5"/><path d="M16,186.39999999999998 v-3 m-1,1 l1,-1 l1,1" stroke="#d02020" stroke-width="0.7" fill="none"/><rect x="2.2" y="192.20000000000002" width="3.2" height="3.2" fill="#f2f2f2" stroke="#c8c8c8" stroke-width="0.4"/><path d="M2.9,193.8 h1.8" stroke="#999" stroke-width="0.4"/><circle cx="10" cy="193.8" r="1.1" fill="#8a8a8a"/><path d="M17.8,191.0 l2.8,2.8 l-2.8,2.8 l-2.8,-2.8z" fill="#fff" stroke="#666" stroke-width="0.5"/><circle cx="18.5" cy="194.8" r="1.4" fill="none" stroke="#d03030" stroke-width="0.6"/><rect x="2.2" y="199.8" width="3.2" height="3.2" fill="#f2f2f2" stroke="#c8c8c8" stroke-width="0.4"/><path d="M2.9,201.4 h1.8" stroke="#999" stroke-width="0.4"/><circle cx="10" cy="201.4" r="1.1" fill="#8a8a8a"/><path d="M17.8,198.6 l2.8,2.8 l-2.8,2.8 l-2.8,-2.8z" fill="#fff" stroke="#666" stroke-width="0.5"/><circle cx="18.5" cy="202.4" r="1.4" fill="none" stroke="#d03030" stroke-width="0.6"/><circle cx="10" cy="209" r="1.1" fill="#8a8a8a"/><rect x="15.5" y="206.7" width="5" height="5" fill="#fff" stroke="#666" stroke-width="0.5"/><path d="M16,209.2 v-3 m-1,1 l1,-1 l1,1" stroke="#d02020" stroke-width="0.7" fill="none"/><circle cx="10" cy="216.5" r="1.1" fill="#8a8a8a"/><rect x="15.5" y="214.2" width="5" height="5" fill="#fff" stroke="#666" stroke-width="0.5"/><path d="M16,216.7 v-3 m-1,1 l1,-1 l1,1" stroke="#d02020" stroke-width="0.7" fill="none"/><circle cx="10" cy="224.1" r="1.1" fill="#8a8a8a"/><rect x="15.5" y="221.79999999999998" width="5" height="5" fill="#fff" stroke="#666" stroke-width="0.5"/><path d="M16,224.29999999999998 v-3 m-1,1 l1,-1 l1,1" stroke="#d02020" stroke-width="0.7" fill="none"/></g></svg>
<div class="a" style="left:0px;top:224px;width:70px;height:8.5px;background:#fbfbfb"></div>
<div class="a" style="left:0px;top:232.3px;width:76px;height:0.8px;background:#d4d4d4"></div>
<div class="a t" style="left:9px;top:225.8px;font-size:5px;color:#333;">模型</div>
<div class="a t" style="left:9px;top:235.20000000000002px;font-size:5px;color:#111;font-weight:bold">默认</div>
<div class="a t" style="left:22.5px;top:242.8px;font-size:4.9px;color:#111;font-weight:bold">图片</div>
<div class="a t" style="left:29px;top:250.4px;font-size:4.9px;color:#3a3a3a;font-weight:bold">车刀</div>
<div class="a t" style="left:22.5px;top:257.9px;font-size:4.9px;color:#111;font-weight:bold">曲面体</div>
<div class="a t" style="left:29.8px;top:265.5px;font-size:4.6px;color:#3a3a3a;font-weight:bold">曲面-导入体1</div>
<div class="a t" style="left:29.8px;top:273.0px;font-size:4.6px;color:#3a3a3a;font-weight:bold">拉伸1_1</div>
<div class="a t" style="left:29.8px;top:280.5px;font-size:4.6px;color:#3a3a3a;font-weight:bold">拉伸1_2</div>
<div class="a t" style="left:29.8px;top:288.0px;font-size:4.6px;color:#3a3a3a;font-weight:bold">拉伸3</div>
<div class="a t" style="left:29.8px;top:295.7px;font-size:4.6px;color:#3a3a3a;font-weight:bold">曲面-导入体8</div>
<div class="a" style="left:29px;top:301.79999999999995px;width:28.5px;height:7.6px;background:#3b8fe8"></div>
<div class="a t" style="left:29.8px;top:303.2px;font-size:4.6px;color:#fff;">曲面-导入体9</div>
<div class="a t" style="left:22.5px;top:310.59999999999997px;font-size:4.9px;color:#111;font-weight:bold">实体</div>
<div class="a t" style="left:29.8px;top:318.2px;font-size:4.6px;color:#3a3a3a;font-weight:bold">实体1</div>
<div class="a t" style="left:22.5px;top:325.59999999999997px;font-size:4.9px;color:#111;font-weight:bold">草图</div>
<div class="a t" style="left:29.8px;top:333.2px;font-size:4.6px;color:#3a3a3a;font-weight:bold">草图1(图片)</div>
<div class="a t" style="left:29.8px;top:340.7px;font-size:4.6px;color:#3a3a3a;font-weight:bold">草图2(图片)</div>
<div class="a t" style="left:29.8px;top:348.2px;font-size:4.6px;color:#3a3a3a;font-weight:bold">草图3(图片)</div>
<div class="a t" style="left:22.5px;top:355.59999999999997px;font-size:4.9px;color:#111;font-weight:bold">参照平面</div>
<div class="a t" style="left:29.8px;top:363.2px;font-size:4.6px;color:#3a3a3a;font-weight:bold">前</div>
<svg width="80" height="400"><defs><clipPath id="c2"><rect x="0" y="233" width="70" height="139"/></clipPath></defs><g clip-path="url(#c2)"><rect x="1.2" y="236.0" width="3.6" height="3.6" fill="#d8d8d8"/><rect x="2.2" y="243.70000000000002" width="3.2" height="3.2" fill="#f2f2f2" stroke="#c8c8c8" stroke-width="0.4"/><path d="M2.9,245.3 h1.8" stroke="#999" stroke-width="0.4"/><rect x="8.5" y="243.5" width="3.6" height="3.6" fill="#f0f0f0" stroke="#999" stroke-width="0.45"/><path d="M9.2,244.20000000000002 l2.2,2.2" stroke="#bbb" stroke-width="0.4"/><circle cx="17.8" cy="245.3" r="2.6" fill="#e8eef6" stroke="#555" stroke-width="0.55"/><rect x="9.3" y="251.6" width="2.8" height="2.8" fill="#555"/><rect x="16" y="251.1" width="3.6" height="3.6" fill="#f0f0f0" stroke="#999" stroke-width="0.45"/><circle cx="25" cy="252.9" r="2" fill="#5a9ad8" stroke="#666" stroke-width="0.5"/><rect x="2.2" y="258.79999999999995" width="3.2" height="3.2" fill="#f2f2f2" stroke="#c8c8c8" stroke-width="0.4"/><path d="M2.9,260.4 h1.8" stroke="#999" stroke-width="0.4"/><rect x="8.5" y="258.59999999999997" width="3.6" height="3.6" fill="#f0f0f0" stroke="#999" stroke-width="0.45"/><path d="M9.2,259.29999999999995 l2.2,2.2" stroke="#bbb" stroke-width="0.4"/><path d="M17.8,257.59999999999997 l2.8,2.8 l-2.8,2.8 l-2.8,-2.8z" fill="#fff" stroke="#444" stroke-width="0.6"/><rect x="15.6" y="266.0" width="3.8" height="3.8" fill="#fff" stroke="#888" stroke-width="0.5"/><path d="M24.8,265.09999999999997 l2.8,2.8 l-2.8,2.8 l-2.8,-2.8z" fill="#fff" stroke="#444" stroke-width="0.6"/><rect x="15.6" y="273.5" width="3.8" height="3.8" fill="#fff" stroke="#888" stroke-width="0.5"/><path d="M24.8,272.59999999999997 l2.8,2.8 l-2.8,2.8 l-2.8,-2.8z" fill="#fff" stroke="#444" stroke-width="0.6"/><rect x="15.6" y="281.0" width="3.8" height="3.8" fill="#fff" stroke="#888" stroke-width="0.5"/><path d="M24.8,280.09999999999997 l2.8,2.8 l-2.8,2.8 l-2.8,-2.8z" fill="#fff" stroke="#444" stroke-width="0.6"/><rect x="15.6" y="288.5" width="3.8" height="3.8" fill="#fff" stroke="#888" stroke-width="0.5"/><path d="M24.8,287.59999999999997 l2.8,2.8 l-2.8,2.8 l-2.8,-2.8z" fill="#fff" stroke="#444" stroke-width="0.6"/><rect x="15.6" y="296.2" width="3.8" height="3.8" fill="#eee" stroke="#999" stroke-width="0.5"/><path d="M16.3,296.9 l2.4,2.4" stroke="#bbb" stroke-width="0.4"/><path d="M24.8,295.29999999999995 l2.8,2.8 l-2.8,2.8 l-2.8,-2.8z" fill="#fff" stroke="#444" stroke-width="0.6"/><rect x="15.6" y="303.7" width="3.8" height="3.8" fill="#eee" stroke="#999" stroke-width="0.5"/><path d="M16.3,304.4 l2.4,2.4" stroke="#bbb" stroke-width="0.4"/><path d="M24.8,302.79999999999995 l2.8,2.8 l-2.8,2.8 l-2.8,-2.8z" fill="#fff" stroke="#444" stroke-width="0.6"/><rect x="2.2" y="311.49999999999994" width="3.2" height="3.2" fill="#f2f2f2" stroke="#c8c8c8" stroke-width="0.4"/><path d="M2.9,313.09999999999997 h1.8" stroke="#999" stroke-width="0.4"/><rect x="8.5" y="311.29999999999995" width="3.6" height="3.6" fill="#f0f0f0" stroke="#999" stroke-width="0.45"/><path d="M9.2,311.99999999999994 l2.2,2.2" stroke="#bbb" stroke-width="0.4"/><path d="M16,311.29999999999995 h4.5 v4.5 h-4.5z" fill="#e6ecf2" stroke="#555" stroke-width="0.5"/><path d="M15,312.29999999999995 l1,-1 M20.5,311.29999999999995 l-1,1" stroke="#555" stroke-width="0.4"/><rect x="15.6" y="318.7" width="3.8" height="3.8" fill="#fff" stroke="#888" stroke-width="0.5"/><path d="M23,318.79999999999995 h4.5 v4.5 h-4.5z" fill="#e6ecf2" stroke="#555" stroke-width="0.5"/><path d="M22,319.79999999999995 l1,-1 M27.5,318.79999999999995 l-1,1" stroke="#555" stroke-width="0.4"/><rect x="2.2" y="326.49999999999994" width="3.2" height="3.2" fill="#f2f2f2" stroke="#c8c8c8" stroke-width="0.4"/><path d="M2.9,328.09999999999997 h1.8" stroke="#999" stroke-width="0.4"/><rect x="8.5" y="326.29999999999995" width="3.6" height="3.6" fill="#f0f0f0" stroke="#999" stroke-width="0.45"/><path d="M9.2,326.99999999999994 l2.2,2.2" stroke="#bbb" stroke-width="0.4"/><path d="M15,330.79999999999995 L20,325.79999999999995" stroke="#222" stroke-width="0.8"/><path d="M15,330.79999999999995 l1.2,-1.2" stroke="#d02020" stroke-width="0.9"/><rect x="15.6" y="333.7" width="3.8" height="3.8" fill="#fff" stroke="#888" stroke-width="0.5"/><path d="M22,338.29999999999995 L27,333.29999999999995" stroke="#222" stroke-width="0.8"/><path d="M22,338.29999999999995 l2,-2" stroke="#d02020" stroke-width="0.9"/><rect x="15.6" y="341.2" width="3.8" height="3.8" fill="#fff" stroke="#888" stroke-width="0.5"/><path d="M22,345.79999999999995 L27,340.79999999999995" stroke="#222" stroke-width="0.8"/><path d="M22,345.79999999999995 l2,-2" stroke="#d02020" stroke-width="0.9"/><rect x="15.6" y="348.7" width="3.8" height="3.8" fill="#fff" stroke="#888" stroke-width="0.5"/><path d="M22,353.29999999999995 L27,348.29999999999995" stroke="#222" stroke-width="0.8"/><path d="M22,353.29999999999995 l2,-2" stroke="#d02020" stroke-width="0.9"/><rect x="2.2" y="356.49999999999994" width="3.2" height="3.2" fill="#f2f2f2" stroke="#c8c8c8" stroke-width="0.4"/><path d="M2.9,358.09999999999997 h1.8" stroke="#999" stroke-width="0.4"/><rect x="8.5" y="356.29999999999995" width="3.6" height="3.6" fill="#f0f0f0" stroke="#999" stroke-width="0.45"/><path d="M9.2,356.99999999999994 l2.2,2.2" stroke="#bbb" stroke-width="0.4"/><rect x="15" y="355.29999999999995" width="5.5" height="5.5" fill="#fff" stroke="#777" stroke-width="0.55"/><path d="M17.75,355.29999999999995 v5.5 M15,358.04999999999995 h5.5" stroke="#888" stroke-width="0.4"/><rect x="15.6" y="363.7" width="3.8" height="3.8" fill="#eee" stroke="#999" stroke-width="0.5"/><path d="M16.3,364.4 l2.4,2.4" stroke="#bbb" stroke-width="0.4"/><rect x="22" y="362.79999999999995" width="5.5" height="5.5" fill="#fff" stroke="#777" stroke-width="0.55"/><path d="M24.75,362.79999999999995 v5.5 M22,365.54999999999995 h5.5" stroke="#888" stroke-width="0.4"/><rect x="15.6" y="370.5" width="3.8" height="3.8" fill="#eee" stroke="#999" stroke-width="0.5"/><path d="M16.3,371.2 l2.4,2.4" stroke="#bbb" stroke-width="0.4"/><rect x="22" y="369.59999999999997" width="5.5" height="5.5" fill="#fff" stroke="#777" stroke-width="0.55"/><path d="M24.75,369.59999999999997 v5.5 M22,372.34999999999997 h5.5" stroke="#888" stroke-width="0.4"/></g></svg>
<div class="a" style="left:70px;top:233px;width:6px;height:139px;background:#f0f0f0"></div>
<div class="a" style="left:70px;top:233px;width:6px;height:7px;background:#fbfbfb;border:1px solid #e0e0e0"></div>
<div class="a t" style="left:71.6px;top:234.8px;font-size:4px;color:#555;">▴</div>
<div class="a" style="left:70px;top:300px;width:6px;height:55px;background:#e2e2e2"></div>
<div class="a" style="left:70px;top:365px;width:6px;height:7px;background:#fbfbfb;border:1px solid #e0e0e0"></div>
<div class="a t" style="left:71.6px;top:366.6px;font-size:4px;color:#555;">▾</div>
<div class="a" style="left:15px;top:84.8px;width:6.2px;height:6.6px;border:0.6px dotted #666"></div>
<div class="a" style="left:83px;top:59px;width:78px;height:13.5px;background:#6d6d6d;border-radius:2px;box-shadow:0 0 1px #555"></div>
<svg width="200" height="120"><path d="M87,61 l1.5,1.5 l1.5,-1.5" fill="#fff" stroke="#fff" stroke-width="0.6"/><path d="M87.5,64.5 l1.5,2 l1.5,-2z" fill="#fff"/></svg>
<div class="a t" style="left:91.6px;top:61.8px;font-size:6.6px;color:#f4f4f4;font-weight:bold">曲面偏移</div>
<div class="a" style="left:125px;top:62.5px;width:8.5px;height:7px;background:#4e4e4e;border-radius:1px"></div>
<div class="a t" style="left:126.5px;top:63.8px;font-size:4.5px;color:#fff;font-weight:bold">Q<span style="font-size:3px">▾</span></div>
<div class="a" style="left:137.5px;top:62.5px;width:7px;height:7px;background:#4e4e4e;border-radius:1px"></div>
<div class="a" style="left:146px;top:62.5px;width:7px;height:7px;background:#4e4e4e;border-radius:1px"></div>
<svg width="200" height="120"><path d="M139,66 l1.5,1.6 l3,-3.6" stroke="#fff" stroke-width="0.9" fill="none"/><path d="M147.8,64.2 l3.4,3.4 m0,-3.4 l-3.4,3.4" stroke="#fff" stroke-width="0.9"/></svg>
<div class="a" style="left:83px;top:75px;width:92px;height:26px;background:#6a6a6a;border-radius:2px;box-shadow:0 0 1px #555"></div>
<div class="a" style="left:86px;top:77.5px;width:3px;height:4px;background:#7a7a7a"></div>
<div class="a" style="left:90px;top:76.8px;width:32px;height:6.8px;background:#5a5a5a;border:1px solid #d8a428;border-radius:1px"></div>
<div class="a t" style="left:104px;top:77.8px;font-size:4.6px;color:#fff;">面</div>
<div class="a" style="left:124px;top:76.8px;width:7px;height:6.8px;background:#555;border-radius:1px"></div>
<svg width="200" height="120"><path d="M127.5,77.8 l-1.5,1.8 h3z M127.5,82.6 l-1.5,-1.8 h3z" fill="#ddd"/><path d="M127.5,79.5 v1.5" stroke="#ddd" stroke-width="0.6"/></svg>
<div class="a" style="left:132.5px;top:76.8px;width:8px;height:6.8px;background:#505050;border-radius:1px"></div>
<svg width="200" height="120"><path d="M134.2,81.8 q2.8,-3.5 5.6,-0.5" stroke="#fff" stroke-width="1.2" fill="none"/><path d="M133.2,80.5 l1.2,2.2 l1.6,-1.6z" fill="#fff"/></svg>
<div class="a" style="left:92px;top:85.3px;width:30px;height:6px;background:#636363;border:1px solid #7c7c7c"></div>
<div class="a t" style="left:93px;top:86.1px;font-size:4.2px;color:#e4e4e4;">曲面-导入体3</div>
<div class="a t" style="left:92px;top:94.2px;font-size:4.5px;color:#eee;">偏移距离</div>
<div class="a" style="left:114.6px;top:93.3px;width:8px;height:5.5px;background:#3e3e3e;border-radius:1px"></div>
<svg width="200" height="120"><path d="M116,96.2 h5 m-4,-1.3 l-1,1.3 l1,1.3 m3,-2.6 l1,1.3 l-1,1.3" stroke="#fff" stroke-width="0.6" fill="none"/></svg>
<div class="a" style="left:124px;top:93px;width:27.5px;height:6.5px;background:#5c5c5c;border:1px solid #7a7a7a"></div>
<div class="a" style="left:125px;top:94px;width:3px;height:4.5px;background:#4a4a4a"></div>
<div class="a t" style="left:129px;top:93.9px;font-size:5px;color:#d8d8d8;font-weight:normal">12.5 mm</div>
<div class="a" style="left:146.5px;top:93px;width:5px;height:6.5px;background:#777;border:1px solid #999"></div>
<div class="a t" style="left:147.3px;top:92.9px;font-size:3px;color:#ddd;font-weight:normal">▴</div>
<div class="a t" style="left:147.3px;top:95.9px;font-size:3px;color:#ddd;font-weight:normal">▾</div>
<div class="a" style="left:153px;top:93.5px;width:5px;height:5.5px;background:#4a4a4a"></div>
<svg width="200" height="120"><path d="M153.8,98 h4 M154.2,98 v-3 M155.5,98 v-2 M156.8,98 v-2 M157.8,98 v-3" stroke="#fff" stroke-width="0.6"/></svg>
<svg width="200" height="120"><rect x="159" y="93" width="8" height="6.5" fill="#555"/><circle cx="163" cy="96.2" r="2.3" fill="none" stroke="#e8e8e8" stroke-width="0.6"/><path d="M148.2,98.3 v5.6 l1.3,-1.2 l1.2,2.2 l0.9,-0.5 l-1.1,-2.1 l1.8,-0.1z" stroke="#222" stroke-width="0.5" fill="#fff"/></svg>
<div class="a" style="left:295px;top:56.3px;width:200.5px;height:10px;background:#d4d4d4;border:1px solid #c4c4c4;border-top:none;box-shadow:0 1px 1px rgba(0,0,0,0.15)"></div>
<svg width="723" height="80"><circle cx="300.3" cy="61.3" r="3.2" fill="#eef0f2" stroke="#6a6a6a" stroke-width="0.6"/><rect x="307.05" y="63.6" width="1" height="1" fill="#333"/><path d="M311.2,59.2 h5 v5.2 h-5z" fill="#e4e4e4" stroke="#666" stroke-width="0.6"/><path d="M311.2,59.2 l1.6,-1.4 h5 v5.2 l-1.6,1.4 M316.2,59.2 l1.6,-1.4" fill="#d0d0d0" stroke="#666" stroke-width="0.5"/><rect x="320.85" y="63.6" width="1" height="1" fill="#333"/><rect x="325" y="58" width="6.6" height="6.8" rx="1.2" fill="#f0c030"/><rect x="325" y="61.3" width="6.6" height="3.5" rx="1" fill="#48a848"/><rect x="325" y="58" width="6.6" height="1.6" rx="0.8" fill="#e05a30"/><rect x="335.05" y="63.6" width="1" height="1" fill="#333"/><rect x="342" y="58.3" width="6" height="6" fill="#f2dada" stroke="#b04848" stroke-width="0.6"/><circle cx="345" cy="61.3" r="1.4" fill="none" stroke="#c04040" stroke-width="0.6"/><path d="M342,58.3 l1,-1 h6 v6 l-1,1" fill="none" stroke="#b04848" stroke-width="0.4"/><rect x="351.75" y="63.6" width="1" height="1" fill="#333"/><path d="M356,64.5 h6.2 v-5 l-2,-1.6 h-1" fill="#fff" stroke="#555" stroke-width="0.55"/><path d="M356,64.5 v-1.5 l3.5,-3" stroke="#d03030" stroke-width="0.8" fill="none"/><path d="M366,57.8 v6.7 h6.5 q0,-3.5 -3,-4.5" fill="#fff" stroke="#555" stroke-width="0.55"/><path d="M366.5,64 l3.2,-3" stroke="#d03030" stroke-width="0.7"/><rect x="375.3" y="58.2" width="6.2" height="6.4" fill="#fff" stroke="#666" stroke-width="0.6"/><path d="M377.3,58.2 v6.4 M379.5,58.2 v6.4" stroke="#666" stroke-width="0.6"/><path d="M385,64.3 l3.3,-5.8 l3.3,5.8z" fill="#e04a30"/><path d="M386.2,64.3 h4.2" stroke="#fff" stroke-width="0.9"/><circle cx="388.3" cy="61.3" r="0.8" fill="#fff"/><path d="M399.5,58 l4.5,6" stroke="#9a9a9a" stroke-width="0.6"/><rect x="407" y="57.8" width="8" height="7" fill="#eba8a4"/><rect x="408" y="58.6" width="6" height="5.4" fill="none" stroke="#c06060" stroke-width="0.5"/><rect x="407.3" y="58" width="1.4" height="1.4" fill="#333"/><rect x="413.3" y="63.4" width="1.4" height="1.4" fill="#333"/><circle cx="421" cy="61.3" r="2.8" fill="none" stroke="#b8b8b8" stroke-width="0.55"/><circle cx="421" cy="61.3" r="0.8" fill="#c0c0c0"/><circle cx="431" cy="61.3" r="2.8" fill="none" stroke="#b8b8b8" stroke-width="0.55"/><circle cx="431" cy="61.3" r="0.8" fill="#c0c0c0"/><circle cx="441" cy="61.3" r="2.8" fill="none" stroke="#b8b8b8" stroke-width="0.55"/><circle cx="441" cy="61.3" r="0.8" fill="#c0c0c0"/><circle cx="451" cy="61.3" r="2.8" fill="none" stroke="#b8b8b8" stroke-width="0.55"/><circle cx="451" cy="61.3" r="0.8" fill="#c0c0c0"/><circle cx="460.5" cy="61.3" r="2.8" fill="none" stroke="#b8b8b8" stroke-width="0.55"/><circle cx="460.5" cy="61.3" r="0.8" fill="#c0c0c0"/><circle cx="470" cy="61.3" r="2.8" fill="none" stroke="#b8b8b8" stroke-width="0.55"/><circle cx="470" cy="61.3" r="0.8" fill="#c0c0c0"/><circle cx="480" cy="61.3" r="2.8" fill="none" stroke="#b8b8b8" stroke-width="0.55"/><circle cx="480" cy="61.3" r="0.8" fill="#c0c0c0"/><circle cx="489.5" cy="61.3" r="2.8" fill="none" stroke="#b8b8b8" stroke-width="0.55"/><circle cx="489.5" cy="61.3" r="0.8" fill="#c0c0c0"/></svg>
<svg width="723" height="407">
<path d="M91.5,349 v-9" stroke="#3aa040" stroke-width="0.8"/><path d="M91.5,349 h9" stroke="#d04040" stroke-width="0.8"/>
<path d="M91.5,349 l-1,0.8" stroke="#2040c0" stroke-width="1"/>
<path d="M99,347.5 l2,2.5 m0,-2.5 l-2,2.5" stroke="#d04040" stroke-width="0.5"/>
<rect x="85" y="355" width="35" height="3" fill="#111" rx="1"/><rect x="86" y="356" width="33" height="1" fill="#fff"/>
<path d="M516,176 h3 l-3,3 h3" stroke="#e0e0e0" stroke-width="0.5" fill="none"/>
<path d="M514.5,329 h3 v4 h-3z" fill="#dcdcdc"/>
<path d="M708,57.8 l2.2,2.2 l-2.2,0.3z" fill="#f0f0f0" stroke="#eee" stroke-width="0.6"/>
</svg>
<div class="a t" style="left:120.5px;top:354.3px;font-size:4.5px;color:#444;font-weight:normal">5.0 mm</div>
<svg width="723" height="407"><circle cx="650.3" cy="364.6" r="11" fill="#1f2023"/><circle cx="650.3" cy="364.6" r="11" fill="none" stroke="#444" stroke-width="0.6"/>
<path d="M642,365.8 h17" stroke="#3a6ad0" stroke-width="1" stroke-dasharray="1.5,0.8"/></svg>
<div class="a t" style="left:643.8px;top:367.5px;font-size:5px;color:#eee;font-weight:normal">09:50</div>
<div class="a t" style="left:79.5px;top:366px;font-size:5px;color:#555;">ı</div>
<div class="a" style="left:84.3px;top:364.5px;width:27px;height:7.5px;background:#cfe3f7;border-radius:1px"></div>
<div class="a t" style="left:88.5px;top:366.2px;font-size:4.8px;color:#2a3a5a;">模型视图</div>
<svg width="723" height="407"><path d="M112,364.5 h17 l-3,7.5 h-14z" fill="#f8e68a"/></svg>
<div class="a t" style="left:114px;top:366.2px;font-size:4.8px;color:#4a3a10;">文件</div>
<div class="a t" style="left:686.5px;top:366.3px;font-size:5px;color:#999;font-weight:normal">›</div>
<div class="a t" style="left:692.8px;top:366.3px;font-size:5px;color:#777;font-weight:normal">×</div>
<div class="a" style="left:698.5px;top:365.3px;width:6px;height:6px;background:#fff;border:1px solid #ddd"></div>
<div class="a" style="left:705.3px;top:365.3px;width:6px;height:6px;background:#fff;border:1px solid #ddd"></div>
<svg width="723" height="407"><circle cx="701.5" cy="368.3" r="1.5" fill="#222"/><path d="M706.8,367.5 h3 l-1.5,2z" fill="#222"/></svg>
<div class="a" style="left:14.5px;top:373.7px;width:16.5px;height:8.3px;background:#fbfbfb;border:0.8px solid #c4c8cc"></div>
<div class="a t" style="left:16px;top:375.6px;font-size:4.6px;color:#8090a8;">自动</div>
<div class="a t" style="left:27.8px;top:376px;font-size:3.3px;color:#bbb;">▾</div>
<div class="a" style="left:33.5px;top:373.7px;width:17px;height:8.3px;background:#fbfbfb;border:0.8px solid #c4c8cc"></div>
<div class="a t" style="left:35px;top:375.6px;font-size:4.6px;color:#8090a8;">自动</div>
<div class="a t" style="left:47px;top:376px;font-size:3.3px;color:#bbb;">▾</div>
<div class="a" style="left:53px;top:373px;width:0.8px;height:10px;background:#d0d0d0"></div>
<div class="a" style="left:56px;top:373.2px;width:9px;height:8.8px;background:#ebb0ab"></div>
<div class="a" style="left:76px;top:373.2px;width:9px;height:8.8px;background:#ebb0ab"></div>
<div class="a" style="left:86px;top:373.2px;width:9px;height:8.8px;background:#ebb0ab"></div>
<div class="a" style="left:96px;top:373.2px;width:9px;height:8.8px;background:#ebb0ab"></div>
<div class="a" style="left:106px;top:373.2px;width:9px;height:8.8px;background:#ebb0ab"></div>
<div class="a" style="left:116px;top:373.2px;width:9px;height:8.8px;background:#ebb0ab"></div>
<div class="a" style="left:126px;top:373.2px;width:9px;height:8.8px;background:#ebb0ab"></div>
<div class="a" style="left:136px;top:373.2px;width:9px;height:8.8px;background:#ebb0ab"></div>
<div class="a" style="left:146px;top:373.2px;width:9px;height:8.8px;background:#ebb0ab"></div>
<div class="a" style="left:156px;top:373.2px;width:9px;height:8.8px;background:#ebb0ab"></div>
<div class="a" style="left:166px;top:373.2px;width:9px;height:8.8px;background:#ebb0ab"></div>
<div class="a" style="left:176px;top:373.2px;width:9px;height:8.8px;background:#ebb0ab"></div>
<svg width="723" height="407"><rect x="6" y="374.5" width="5" height="6" fill="none" stroke="#333" stroke-width="0.9"/><path d="M5.5,374 l6,7 m0,-7 l-6,7" stroke="#d03030" stroke-width="0.9"/><path d="M1.5,374 v8" stroke="#c8c8c8" stroke-width="0.6" stroke-dasharray="0.6,0.6"/><path d="M57.5,380 a2,2 0 0 1 1,-3.5 a2.5,2.5 0 0 1 5,0 a2,2 0 0 1 1,3.5z" fill="#8a8a8a" stroke="#555" stroke-width="0.4"/><path d="M58.5,376.5 h4" stroke="#fff" stroke-width="0.8"/><circle cx="70.5" cy="377.3" r="3.4" fill="#7a9a7a" stroke="#777" stroke-width="0.5"/><path d="M68.5,378 l1.5,1.5 l3,-3" stroke="#3ab03a" stroke-width="1" fill="none"/><path d="M77.5,375 h6 M77.5,377.3 h6 M77.5,379.6 h6 M79.5,374.5 v6 M81.5,374.5 v6" stroke="#777" stroke-width="0.6"/><path d="M87.5,377 l3,-2.5 l3,2.5 v3 h-6z" fill="#999" stroke="#555" stroke-width="0.4"/><path d="M88,376.8 l2.5,-2 l2.5,2" stroke="#fff" stroke-width="0.7" fill="none"/><rect x="97.8" y="374.8" width="5.5" height="5.5" fill="#f4f4f4" stroke="#555" stroke-width="0.6"/><path d="M99,379 l3,-3" stroke="#666" stroke-width="0.6"/><path d="M108,380.5 l5,-6" stroke="#555" stroke-width="0.8"/><circle cx="109.5" cy="379.3" r="1.5" fill="#999"/><path d="M118,380.5 l5,-6" stroke="#555" stroke-width="0.8"/><circle cx="119.5" cy="379.3" r="1.5" fill="#999"/><rect x="127.5" y="374.5" width="6" height="6" fill="#fff" stroke="#555" stroke-width="0.5"/><rect x="127.5" y="374.5" width="3" height="3" fill="#d02020"/><path d="M138,380.5 l5,-6" stroke="#555" stroke-width="0.8"/><circle cx="139.5" cy="379.3" r="1.5" fill="#999"/><rect x="147.8" y="374.8" width="5.5" height="5.5" fill="#f4f4f4" stroke="#555" stroke-width="0.6"/><path d="M149,379 l3,-3" stroke="#666" stroke-width="0.6"/><path d="M158,380.5 l5,-6" stroke="#555" stroke-width="0.8"/><circle cx="159.5" cy="379.3" r="1.5" fill="#999"/><path d="M168,380.5 l5,-6" stroke="#555" stroke-width="0.8"/><circle cx="169.5" cy="379.3" r="1.5" fill="#999"/><path d="M177.5,375 h6 M177.5,377.3 h6 M177.5,379.6 h6 M179.5,374.5 v6 M181.5,374.5 v6" stroke="#777" stroke-width="0.6"/><rect x="185" y="379.5" width="1" height="1" fill="#333"/><path d="M190,373.5 v8.5" stroke="#d4d4d4" stroke-width="0.6" stroke-dasharray="0.8,0.6"/><circle cx="197.2" cy="377.5" r="2.6" fill="#f4f4f4" stroke="#bdbdbd" stroke-width="0.6"/><path d="M198.7,379 l1.6,1.6" stroke="#bdbdbd" stroke-width="0.6"/><circle cx="206.6" cy="377.5" r="2.6" fill="#f4f4f4" stroke="#bdbdbd" stroke-width="0.6"/><path d="M208.1,379 l1.6,1.6" stroke="#bdbdbd" stroke-width="0.6"/><circle cx="217" cy="377.5" r="2.6" fill="#f4f4f4" stroke="#bdbdbd" stroke-width="0.6"/><path d="M218.5,379 l1.6,1.6" stroke="#bdbdbd" stroke-width="0.6"/><circle cx="226.5" cy="377.5" r="2.6" fill="#f4f4f4" stroke="#bdbdbd" stroke-width="0.6"/><path d="M228.0,379 l1.6,1.6" stroke="#bdbdbd" stroke-width="0.6"/><circle cx="235.9" cy="377.5" r="2.6" fill="#f4f4f4" stroke="#bdbdbd" stroke-width="0.6"/><path d="M237.4,379 l1.6,1.6" stroke="#bdbdbd" stroke-width="0.6"/><path d="M242.5,375 h5.5 v6 h-5.5z" fill="#dde4ee" stroke="#4a5668" stroke-width="0.7"/><path d="M242.5,375 l1,-1 h5.5 v6 l-1,1" fill="none" stroke="#4a5668" stroke-width="0.5"/><rect x="246.5" y="378.5" width="1.3" height="1.3" fill="#222"/><path d="M252.5,375 h5.5 v6 h-5.5z" fill="#f0e8e8" stroke="#4a5668" stroke-width="0.7"/><path d="M252.5,375 l1,-1 h5.5 v6 l-1,1" fill="#e07070" stroke="#4a5668" stroke-width="0.5"/><rect x="252.5" y="375" width="5.5" height="1.8" fill="#e07070"/><path d="M262.2,375 h5.5 v6 h-5.5z" fill="#f4f4f4" stroke="#c0c0c0" stroke-width="0.6"/><path d="M262.2,375 l1,-1 h5.5 v6 l-1,1" fill="none" stroke="#c0c0c0" stroke-width="0.5"/><path d="M272.2,375 h5.5 v6 h-5.5z" fill="#f4f4f4" stroke="#c0c0c0" stroke-width="0.6"/><path d="M272.2,375 l1,-1 h5.5 v6 l-1,1" fill="none" stroke="#c0c0c0" stroke-width="0.5"/><path d="M281.7,375 h5.5 v6 h-5.5z" fill="#f4f4f4" stroke="#c0c0c0" stroke-width="0.6"/><path d="M281.7,375 l1,-1 h5.5 v6 l-1,1" fill="none" stroke="#c0c0c0" stroke-width="0.5"/><path d="M291.2,375 h5.5 v6 h-5.5z" fill="#f4f4f4" stroke="#c0c0c0" stroke-width="0.6"/><path d="M291.2,375 l1,-1 h5.5 v6 l-1,1" fill="none" stroke="#c0c0c0" stroke-width="0.5"/><path d="M301,381 l5,-6 M301,376 l3,2 l-1,3" stroke="#b8b8b8" stroke-width="0.6" fill="none"/><rect x="312" y="375" width="6" height="6" fill="none" stroke="#bbb" stroke-width="0.6"/><path d="M312,377 h6" stroke="#bbb" stroke-width="0.6"/><path d="M321.7,373.5 v8.5" stroke="#d0d0d0" stroke-width="0.6"/><rect x="326" y="375" width="5.5" height="6" fill="none" stroke="#b8b8b8" stroke-width="0.6"/><rect x="334.2" y="379.8" width="1" height="1" fill="#333"/><path d="M339,373.5 v8.5" stroke="#d0d0d0" stroke-width="0.6" stroke-dasharray="0.8,0.6"/><rect x="342.3" y="375" width="6.5" height="5.5" fill="#f6f6f6" stroke="#555" stroke-width="0.6"/><path d="M342.3,377.6 h6.5" stroke="#e04040" stroke-width="1"/><path d="M342.3,381 h6.5" stroke="#e08080" stroke-width="0.6"/><path d="M353,381 v-6 h2.5 q3.5,0 3.5,3.5 v2.5" fill="#f6f6f6" stroke="#555" stroke-width="0.6"/><path d="M355,381 l3,-2.5" stroke="#d03030" stroke-width="0.7"/><circle cx="365.4" cy="377" r="2.1" fill="#fff" stroke="#555" stroke-width="0.6"/><circle cx="365.4" cy="377" r="0.8" fill="#d03030"/><path d="M362,380.8 h6.8" stroke="#555" stroke-width="0.9"/><rect x="371.8" y="374.5" width="6" height="6.3" fill="#eee" stroke="#444" stroke-width="0.6"/><path d="M371.8,377.3 h6" stroke="#d03030" stroke-width="1.1"/><circle cx="384.8" cy="377.5" r="2.8" fill="none" stroke="#c0c0c0" stroke-width="0.6"/><rect x="391.6" y="379.8" width="1" height="1" fill="#333"/></svg>
<div class="a t" style="left:6px;top:386px;font-size:5px;color:#eee;">准备</div>
<div class="a" style="left:666.7px;top:384px;width:56.3px;height:7.8px;background:#95989a"></div>
<div class="a t" style="left:670px;top:386px;font-size:4.6px;color:#e8e8e8;letter-spacing:0.2px;font-weight:normal">0: 0: 0.00</div>
<div class="a" style="left:696.5px;top:385px;width:3.5px;height:6.5px;background:#f4f4f4"></div>
<div class="a" style="left:702px;top:385px;width:11.5px;height:6.5px;background:#000;border:0.5px solid #1a3a1a"></div>
<div class="a" style="left:714.5px;top:385px;width:5.8px;height:6.5px;background:#2a9a3a"></div>
<div class="a" style="left:722px;top:56px;width:1px;height:308px;background:#cfcfcf"></div>
<svg width="723" height="407">
<circle cx="717.5" cy="61.5" r="2.6" fill="#9ab4d4"/><rect x="716.5" y="61" width="3.5" height="3" fill="#d8e0ea" stroke="#6a7a90" stroke-width="0.4"/>
<rect x="715" y="84" width="5" height="4" fill="#3a8a3a"/><rect x="715" y="84" width="5" height="1.5" fill="#e0b020"/><rect x="715" y="84" width="1.5" height="4" fill="#e05030"/>
</svg>
<div class="a t" style="left:715px;top:66px;font-size:4.4px;color:#333;"><span style="writing-mode:vertical-rl">属性</span></div>
<div class="a t" style="left:715px;top:89.2px;font-size:4.35px;color:#444;font-weight:normal"><span style="writing-mode:vertical-rl">Accuracy Analyzer(TM)</span></div>
</div></body></html>
